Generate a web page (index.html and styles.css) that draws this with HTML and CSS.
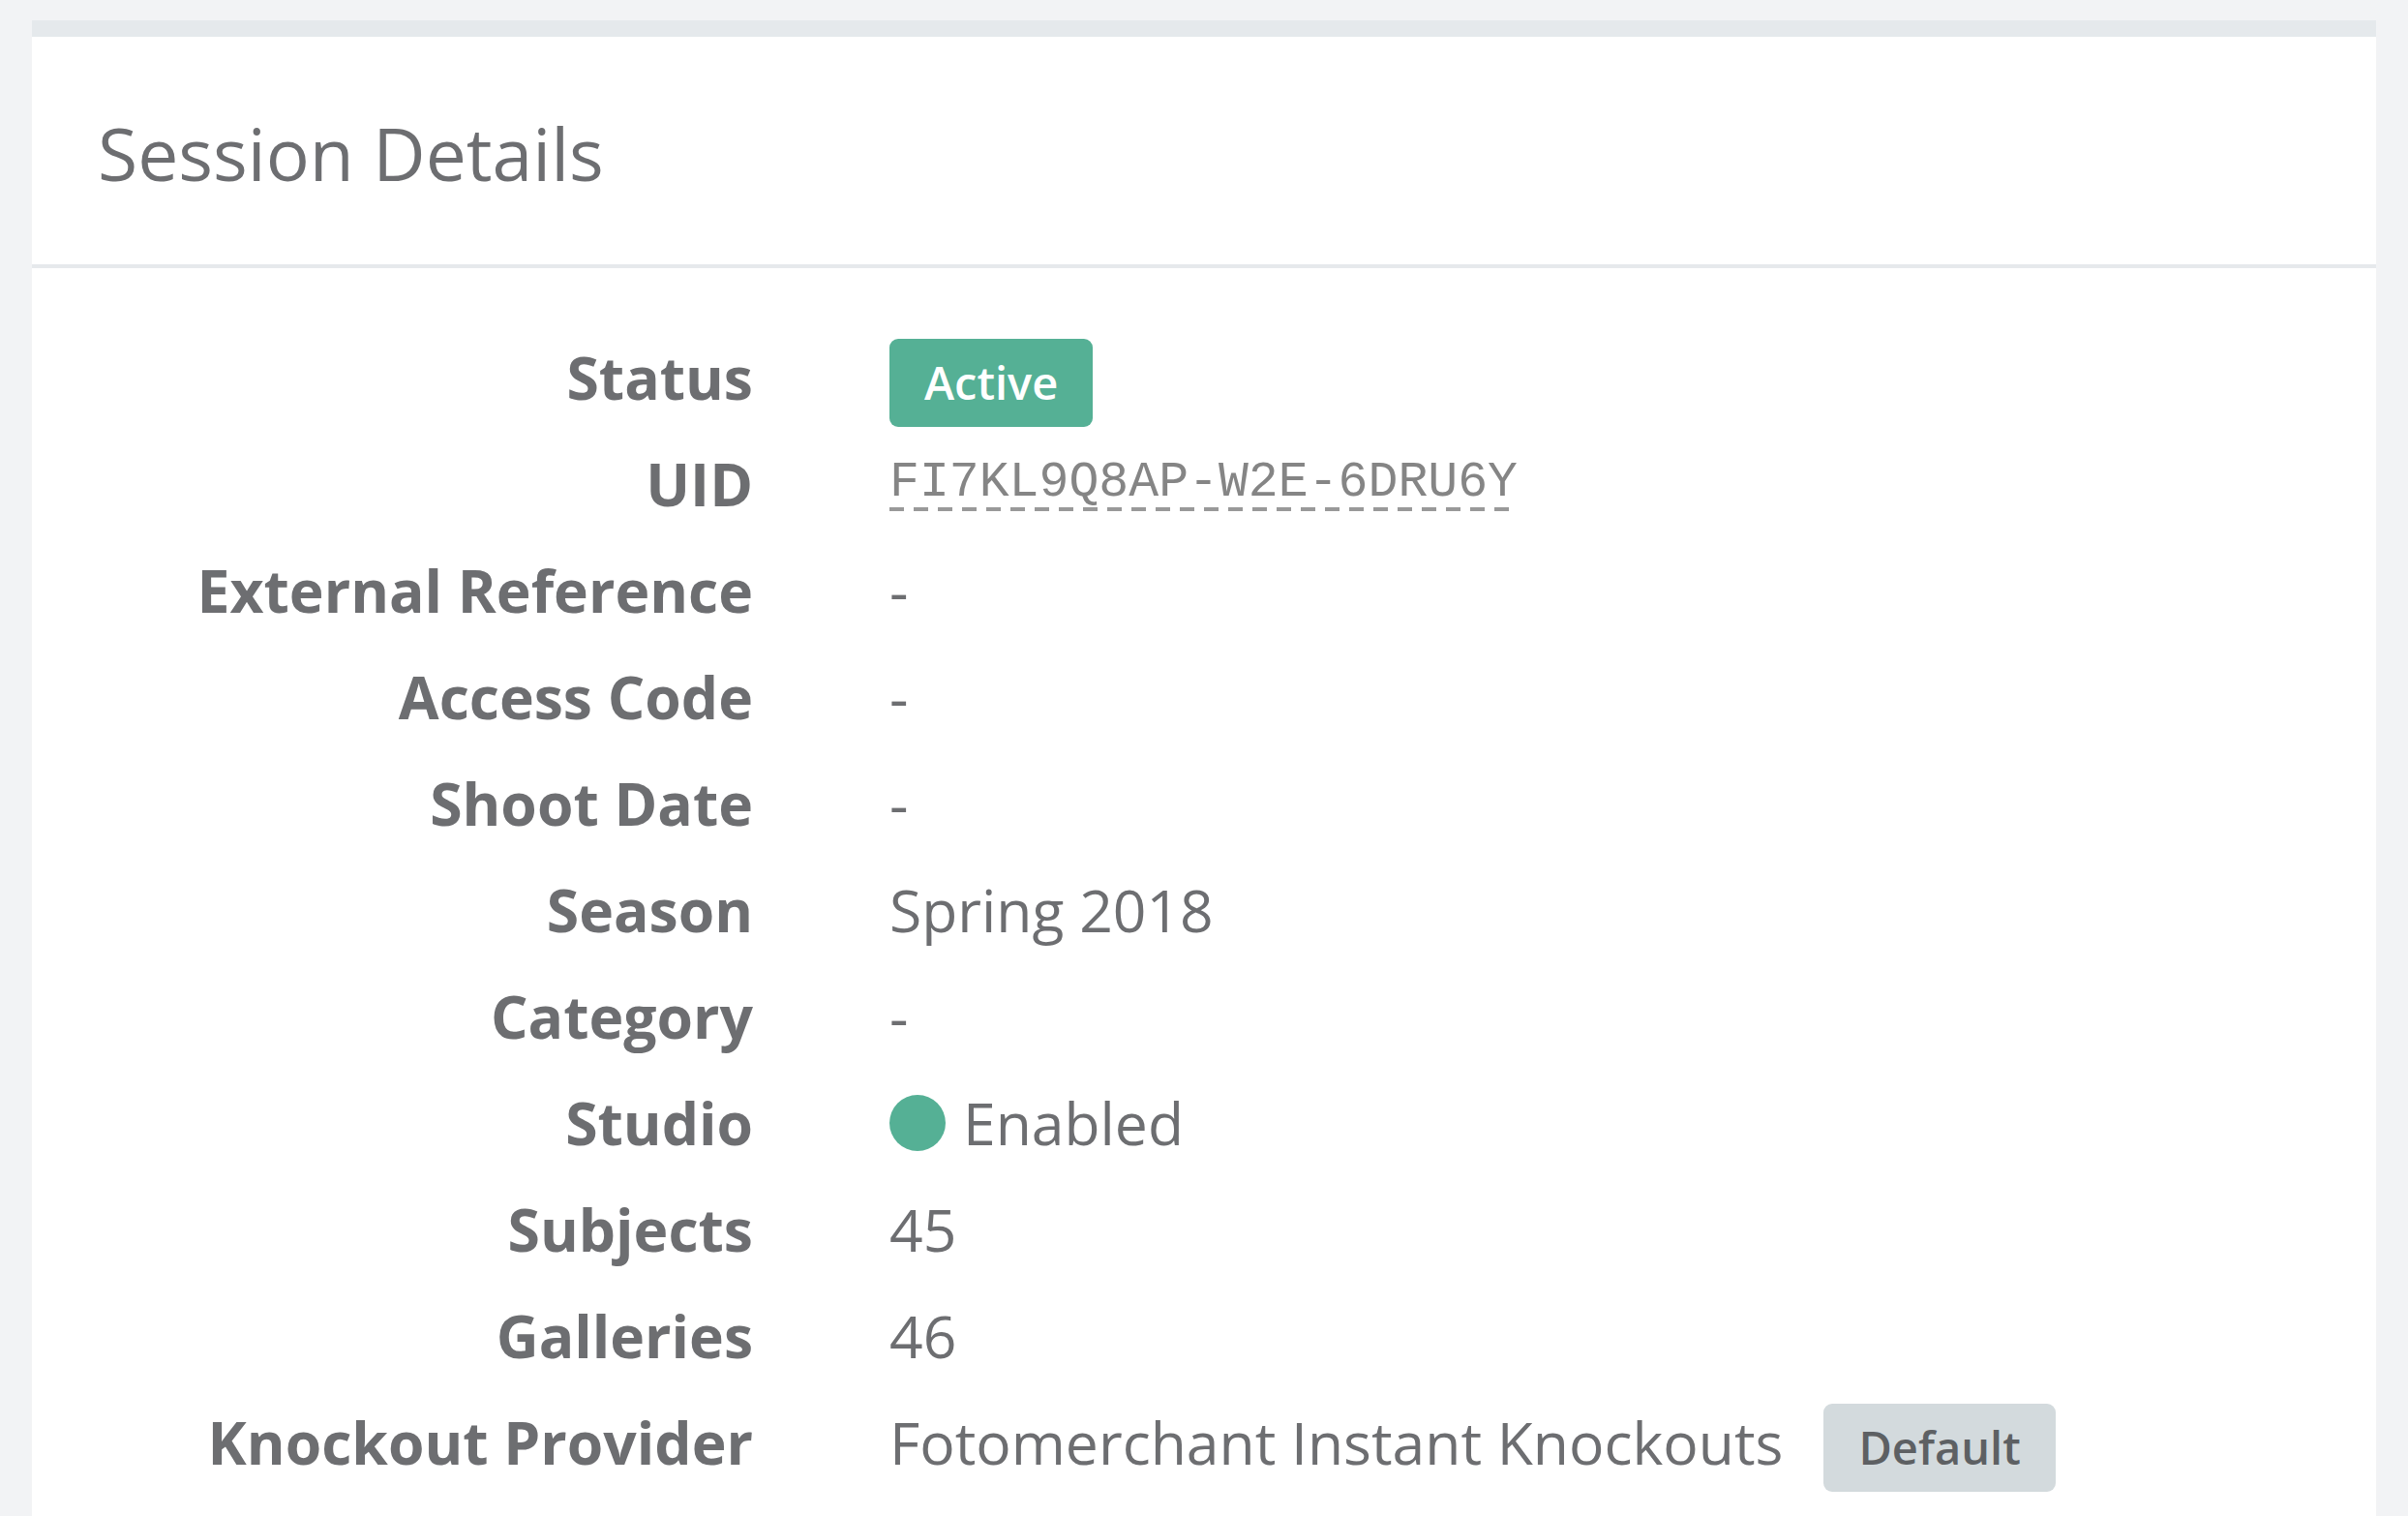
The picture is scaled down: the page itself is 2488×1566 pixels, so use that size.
FILE: index.html
```html
<!DOCTYPE html>
<html lang="en">
<head>
    <meta charset="UTF-8">
    <title>Session Details</title>
    <link rel="stylesheet" href="styles.css">
</head>
<body>
    <div class="page">
        <div class="card">
            <div class="card-header">
                <h2>Session Details</h2>
            </div>
            <dl class="details">
                <div class="row">
                    <dt>Status</dt>
                    <dd><span class="badge badge-active">Active</span></dd>
                </div>
                <div class="row">
                    <dt>UID</dt>
                    <dd><span class="uid">FI7KL9Q8AP-W2E-6DRU6Y</span></dd>
                </div>
                <div class="row">
                    <dt>External Reference</dt>
                    <dd>-</dd>
                </div>
                <div class="row">
                    <dt>Access Code</dt>
                    <dd>-</dd>
                </div>
                <div class="row">
                    <dt>Shoot Date</dt>
                    <dd>-</dd>
                </div>
                <div class="row">
                    <dt>Season</dt>
                    <dd>Spring 2018</dd>
                </div>
                <div class="row">
                    <dt>Category</dt>
                    <dd>-</dd>
                </div>
                <div class="row">
                    <dt>Studio</dt>
                    <dd><span class="dot"></span>Enabled</dd>
                </div>
                <div class="row">
                    <dt>Subjects</dt>
                    <dd>45</dd>
                </div>
                <div class="row">
                    <dt>Galleries</dt>
                    <dd>46</dd>
                </div>
                <div class="row">
                    <dt>Knockout Provider</dt>
                    <dd>Fotomerchant Instant Knockouts<span class="badge badge-default">Default</span></dd>
                </div>
            </dl>
        </div>
    </div>
</body>
</html>
```

FILE: styles.css
```css
html, body {
    height: 100%;
}

body {
    margin: 0;
    font-family: 'Open Sans', 'Noto Sans', sans-serif;
    background-color: #f2f3f5;
    color: #6d6e71;
    overflow: hidden;
}

.page {
    padding: 21px 33px 0;
}

.card {
    background-color: #ffffff;
    border-top: 17px solid #e5e9ec;
}

.card-header {
    padding: 69px 68px 64px;
    border-bottom: 4px solid #e6e9ec;
}

.card-header h2 {
    margin: 0;
    font-size: 75px;
    font-weight: 400;
    line-height: normal;
    color: #6d6e71;
}

.details {
    margin: 0;
    padding: 71px 0 40px;
}

.row {
    display: grid;
    grid-template-columns: 745px 1fr;
    column-gap: 141px;
    align-items: baseline;
    height: 110px;
    font-size: 60.6px;
    line-height: normal;
}

.row dt {
    text-align: right;
    font-weight: 700;
}

.row dd {
    margin: 0;
    white-space: nowrap;
}

.badge {
    display: inline-block;
    padding: 13px 36px 14px;
    border-radius: 9px;
    font-size: 47px;
    font-weight: 600;
    line-height: normal;
}

.badge-active {
    background-color: #55b095;
    color: #ffffff;
}

.badge-default {
    margin-left: 42px;
    background-color: #d3dadd;
    color: #5d6063;
}

.uid {
    display: inline-block;
    vertical-align: 11px;
    padding-bottom: 1px;
    font-family: 'Liberation Mono', 'Courier New', monospace;
    font-size: 51.5px;
    line-height: normal;
    color: #858585;
    background-image: linear-gradient(to right, #999999 62%, transparent 62%);
    background-size: 25px 4px;
    background-repeat: repeat-x;
    background-position: left bottom;
}

.dot {
    display: inline-block;
    width: 58px;
    height: 58px;
    margin-right: 18px;
    border-radius: 50%;
    background-color: #55b095;
    vertical-align: -6px;
}
```
